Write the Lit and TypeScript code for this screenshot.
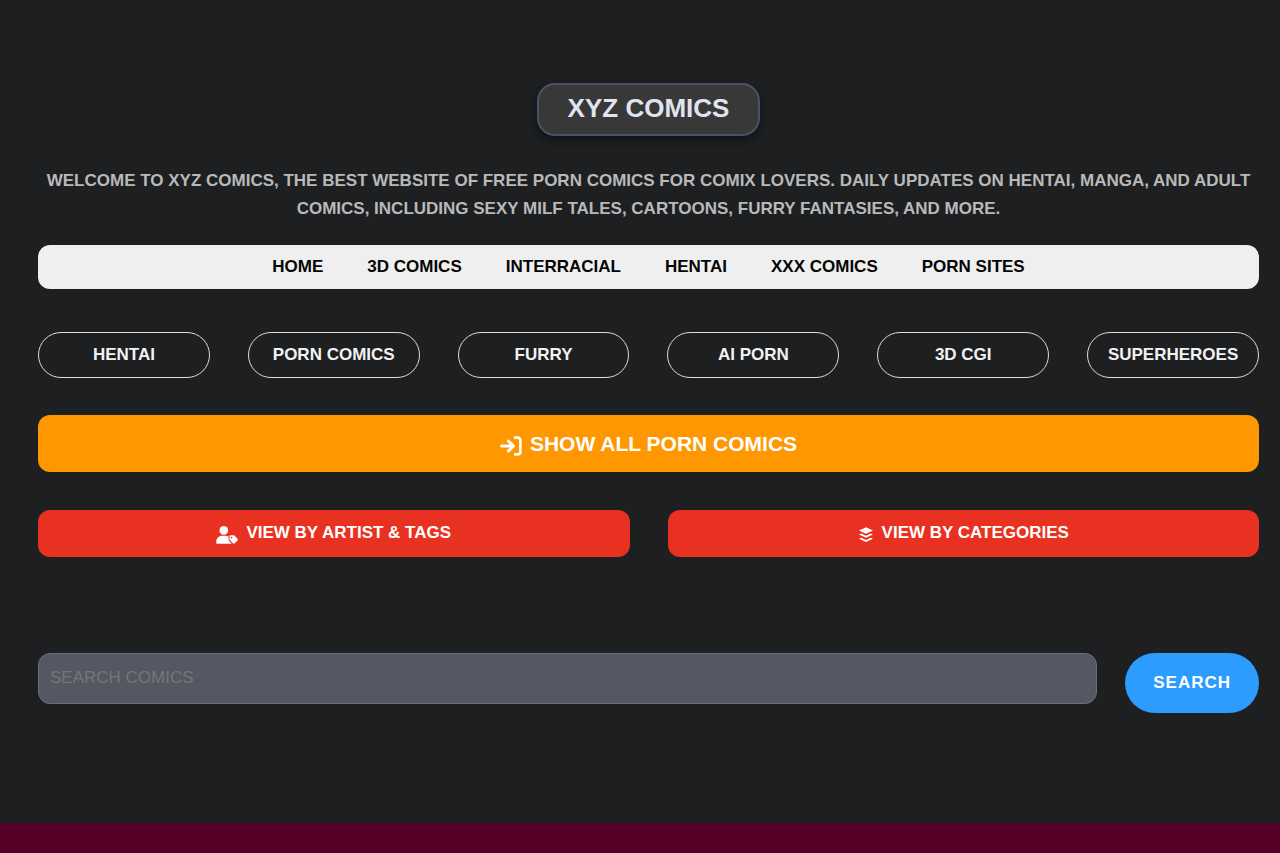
import { LitElement, html, css, svg } from "lit";
import { customElement } from "lit/decorators.js";

const menu = ["Home", "3D Comics", "Interracial", "Hentai", "XXX Comics", "Porn Sites"];
const topics = ["Hentai", "Porn Comics", "Furry", "AI Porn", "3D CGI", "Superheroes"];

const enterIcon = svg`<svg class="icon enter" viewBox="0 0 22 20" fill="none" stroke="currentColor" stroke-width="3" stroke-linecap="round" stroke-linejoin="round" aria-hidden="true">
  <path d="M1.600 10H13M8.400 5l5 5-5 5"/>
  <path stroke-linecap="butt" stroke-width="2.600" d="M14 1.600h3.800a2.600 2.600 0 0 1 2.600 2.600v11.600a2.600 2.600 0 0 1-2.600 2.600H14"/>
</svg>`;

const artistIcon = svg`<svg class="icon artist" viewBox="0 0 22 18" fill="currentColor" aria-hidden="true">
  <circle cx="7.8" cy="4.4" r="4.3"/>
  <path d="M6 9.800h3.600c1.100 0 2.100.3 3 .7v3.800l3.200 3.400H1.300c-.6 0-1-.4-1-1v-1.200c0-3.200 2.500-5.700 5.700-5.700z"/>
  <path fill-rule="evenodd" d="M14.400 9.300h3.100c.4 0 .8.2 1.100.4l2.900 3c.5.5.5 1.200 0 1.700l-2.800 2.900c-.5.5-1.200.5-1.700 0l-3.100-3.200a1.500 1.500 0 0 1-.4-1v-2.900c0-.5.4-.9.9-.9zm1.100 1.400a.9.9 0 1 0 0 1.800.9.9 0 0 0 0-1.800z"/>
</svg>`;

const stackIcon = svg`<svg class="icon stack" viewBox="0 0 14 16" fill="currentColor" aria-hidden="true">
  <path d="M7 .3l6.900 3.200L7 6.700.1 3.500z"/>
  <path d="M.1 7.500l2-1L7 8.800l4.900-2.300 2 1L7 10.800z"/>
  <path d="M.1 11.800l2-1L7 13.100l4.900-2.300 2 1L7 15.100z"/>
</svg>`;

@customElement("app-root")
export class AppRoot extends LitElement {
  static styles = css`
    :host {
      display: block;
      min-height: 100vh;
      background: #560027;
      color: #fff;
      font: bold 17px/28px "Liberation Sans", Arial, sans-serif;
      text-transform: uppercase;
    }
    * { box-sizing: border-box; }
    a { color: inherit; text-decoration: none; }
    .page {
      background: #1e1f21;
      padding: 83px 21px 110px 38px;
    }
    .brand {
      display: block;
      width: fit-content;
      margin: 0 auto 31px;
      padding: 9px 29px 11px;
      border: 2px solid #4a5168;
      border-radius: 18px;
      background: #383838;
      box-shadow: 0 4px 10px rgba(0, 0, 0, 0.45);
      color: #e0e4f0;
      font-size: 26px;
      line-height: 29px;
    }
    h1 { margin: 0; font: inherit; }
    .intro {
      margin: 0 0 22px;
      text-align: center;
      color: #b9b9b9;
    }
    .menu {
      display: flex;
      flex-wrap: wrap;
      justify-content: center;
      column-gap: 44px;
      padding: 8px 12px;
      border-radius: 12px;
      background: #efefef;
      color: #050505;
    }
    .topics {
      display: grid;
      grid-template-columns: repeat(6, minmax(0, 1fr));
      gap: 38px;
      margin-top: 43px;
    }
    .topic {
      padding: 8px 0;
      border: 1px solid #dcdcdc;
      border-radius: 23px;
      text-align: center;
      white-space: nowrap;
      color: #f2f2f2;
    }
    .bar {
      display: flex;
      align-items: center;
      justify-content: center;
      gap: 8px;
      border-radius: 12px;
    }
    .all {
      margin: 37px 0 38px;
      padding: 15px 14px 14px;
      background: #ff9800;
      font-size: 21px;
    }
    .pair {
      display: grid;
      grid-template-columns: 1fr 1fr;
      gap: 38px;
    }
    .red { padding: 9px 9px 10px; background: #e93121; }
    .icon { flex: none; margin-top: 3px; }
    .enter { width: 22px; height: 20px; }
    .artist { width: 22px; height: 18px; }
    .stack { width: 16px; height: 16px; }
    .search {
      display: flex;
      align-items: flex-start;
      gap: 28px;
      margin-top: 96px;
    }
    .field {
      flex: 1;
      min-width: 0;
      height: 51px;
      padding: 0 11px 1px;
      border: 1px solid #6c6e79;
      border-radius: 12px;
      background: #555762;
      color: #fff;
      font: 17px "Liberation Sans", Arial, sans-serif;
      text-transform: uppercase;
    }
    .field::placeholder { color: #757575; opacity: 1; }
    .submit {
      padding: 16px 28px;
      border: 0;
      border-radius: 30px;
      background: #2d9cff;
      color: #fff;
      font: inherit;
      letter-spacing: 1px;
      text-transform: uppercase;
    }
  `;

  render() {
    return html`
      <main class="page">
        <a class="brand" href="#"><h1>XYZ Comics</h1></a>
        <p class="intro">
          Welcome to XYZ Comics, the best website of free porn comics for comix lovers. Daily updates on hentai, manga, and adult comics, including sexy milf tales, cartoons, furry fantasies, and more.
        </p>
        <nav class="menu">${menu.map((m) => html`<a href="#">${m}</a>`)}</nav>
        <nav class="topics">${topics.map((t) => html`<a class="topic" href="#">${t}</a>`)}</nav>
        <a class="bar all" href="#">${enterIcon}<span>Show all porn comics</span></a>
        <div class="pair">
          <a class="bar red" href="#">${artistIcon}<span>View by artist &amp; tags</span></a>
          <a class="bar red" href="#">${stackIcon}<span>View by categories</span></a>
        </div>
        <form class="search" @submit=${(e: Event) => e.preventDefault()}>
          <input class="field" type="search" aria-label="Search comics" placeholder="Search comics" />
          <button class="submit" type="submit">Search</button>
        </form>
      </main>
    `;
  }
}
